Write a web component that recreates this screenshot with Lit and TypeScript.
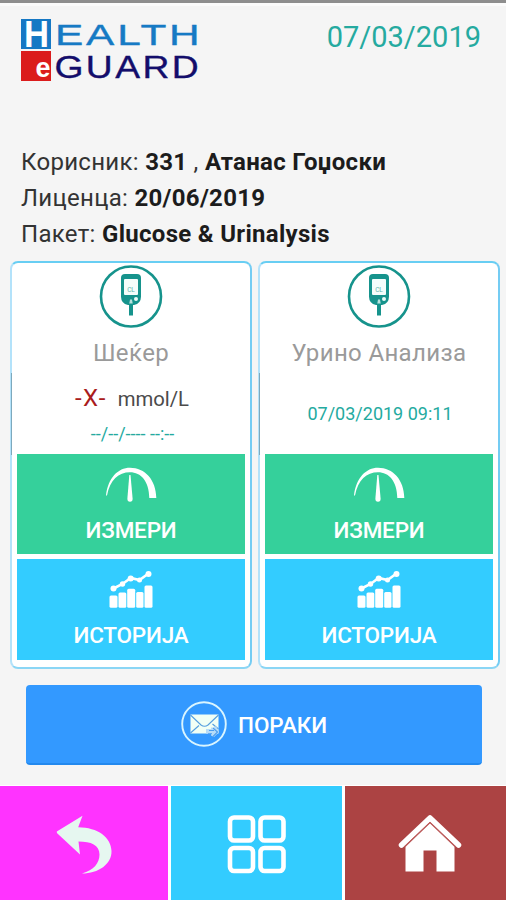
import { LitElement, html, css, svg, nothing } from "lit";
import { customElement, property } from "lit/decorators.js";

const meterIcon = html`<svg width="64" height="64" viewBox="0 0 64 64">
  <circle cx="32" cy="31.500" r="30" fill="#fff" stroke="#16938c" stroke-width="2.600" />
  <path d="M26 9h12q4 0 4 4v18.500q0 7-7 8.500h-6q-7-1.500-7-8.500V13q0-4 4-4z" fill="#16938c" />
  <rect x="25" y="14" width="14" height="16" rx="1" fill="#f4fdfb" />
  <text x="32" y="26.500" text-anchor="middle" font-size="6.500" font-family="Roboto, sans-serif" fill="#5fb5ae">CL</text>
  <circle cx="37" cy="34" r="2" fill="#e9fbf8" />
  <path d="M30 40l1-5.500h2l1 5.500z" fill="#b9e3de" />
  <rect x="30" y="38.500" width="4" height="12" fill="#16938c" />
</svg>`;

const gaugeIcon = html`<svg width="54" height="36" viewBox="0 0 54 36">
  <path d="M2 28.500C4 11 14 .8 26 .8c15 0 26 12 26.300 30.200h-7C45 14 37 5.200 26 5.200 14.500 5.200 6 13 3 28.500z" fill="#fff" />
  <path d="M25.300 8h1.200l2.100 23.500q.1 3.200-2.600 3.200t-2.600-3.200z" fill="#fff" />
</svg>`;

const chartIcon = html`<svg width="46" height="38" viewBox="0 0 46 38">
  <path d="M5.500 18.500l9-4.500 8.200-6 8.800 2 9-6.500" fill="none" stroke="#fff" stroke-width="2.600" />
  <g fill="#fff">
    <circle cx="5.500" cy="18.500" r="3" /><circle cx="14.500" cy="14" r="2.700" /><circle cx="22.700" cy="8.500" r="3" />
    <circle cx="31.500" cy="10" r="2.500" /><circle cx="40.500" cy="4" r="3" />
    <rect x="1.500" y="25.500" width="8" height="12.300" rx="1.500" /><rect x="10.500" y="22.500" width="7.800" height="15.300" rx="1.500" />
    <rect x="19.200" y="18.800" width="8" height="19" rx="1.500" /><rect x="28.200" y="22" width="7.300" height="15.800" rx="1.500" />
    <rect x="36.500" y="15.500" width="8" height="22.300" rx="1.500" />
  </g>
</svg>`;

const mailIcon = html`<svg width="46" height="46" viewBox="0 0 46 46">
  <circle cx="23" cy="23" r="21.800" fill="none" stroke="#d9f5ff" stroke-width="1.900" />
  <rect x="9.500" y="13.500" width="28" height="19" fill="#f1fff5" />
  <path d="M9.500 14l10.500 10q3.500 2.600 7 0l10.500-10M9.500 32l8.500-7.500M37.500 28l-6-5" fill="none" stroke="#559fdf" stroke-width="1.100" />
  <path d="M25 28h5v-1.500h3l2-1.500 3 6-5 5-3-1.500v-2h-5z" fill="#b7dcf8" />
  <path d="M32 27l4.500 4-4.500 4.500M27 32.800h4M28 29.500h5" fill="none" stroke="#4c9dee" stroke-width="1.100" />
</svg>`;

@customElement("health-logo")
export class HealthLogo extends LitElement {
  static styles = css`
    :host { display: block; }
    svg { display: block; overflow: visible; }
    .wide { font-family: "Liberation Sans", sans-serif; letter-spacing: 2px; stroke-width: .35px; }
    .slab { font-family: "Liberation Sans", sans-serif; font-weight: 700; }
  `;
  render() {
    return html`<svg width="182" height="66" viewBox="0 0 182 66">
      <rect x="0" y="1" width="30" height="30" fill="#1678c4" />
      <rect x="0" y="33" width="30" height="30" fill="#db1c1c" />
      <text class="slab" x="3" y="28.800" font-size="36" textLength="25" lengthAdjust="spacingAndGlyphs" fill="#fff">H</text>
      <text class="slab" x="14.500" y="59" font-size="27" textLength="15" lengthAdjust="spacingAndGlyphs" fill="#fff">e</text>
      <text class="wide" x="34" y="27" font-size="30" textLength="147.500" lengthAdjust="spacingAndGlyphs" fill="#167ac4" stroke="#167ac4">EALTH</text>
      <text class="wide" x="33.500" y="59.500" font-size="31" textLength="146.500" lengthAdjust="spacingAndGlyphs" fill="#130d6b" stroke="#130d6b">GUARD</text>
    </svg>`;
  }
}

@customElement("test-card")
export class TestCard extends LitElement {
  @property() name = "";
  @property() value = "";
  @property() unit = "";
  @property() taken = "";

  static styles = css`
    :host {
      display: flex; flex-direction: column; box-sizing: border-box; height: 408px;
      padding: 2px 5px 0; background: #fff; border: 2px solid #8bd6f5; border-top-color: #68cef3;
      border-left-color: #b3e2fa; border-right-color: #74ccf3; border-radius: 8px;
      font-family: Roboto, sans-serif; position: relative;
    }
    :host::before { content: ""; position: absolute; left: -1px; top: 110px; width: 1px; height: 82px; background: #7da9bd; }
    svg { display: block; }
    .head { display: flex; flex-direction: column; align-items: center; height: 189px; flex: none; }
    .name { margin-top: 10px; font-size: 24px; line-height: 28px; letter-spacing: .35px; color: #9a9a9a; white-space: nowrap; }
    .reading { display: flex; align-items: baseline; gap: 11px; margin-top: 16px; padding-left: 2px; line-height: 30px; }
    .value { font-size: 24px; color: #a91c1c; letter-spacing: 1.300px; }
    .unit { font-size: 20.300px; color: #4b4b4b; }
    .taken { color: #24aaa0; font-size: 18px; line-height: 22px; margin-top: 9px; padding-left: 3px; white-space: nowrap; }
    .only { margin-top: 36px; padding-left: 2px; }
    .action {
      display: flex; flex-direction: column; align-items: center; box-sizing: border-box; border: 0; padding: 13px 0 0;
      height: 100px; flex: none; font: 500 22.500px/28px Roboto, sans-serif; letter-spacing: -.2px; color: #fff; margin: 0;
    }
    .measure { background: #35d09b; }
    .history { background: #33ccff; margin-top: 5px; padding-top: 11px; height: 101px; }
    .measure span { margin-top: 13px; }
    .history span { margin-top: 13px; }
  `;

  render() {
    return html`
      <div class="head">
        ${meterIcon}
        <div class="name">${this.name}</div>
        ${this.value
          ? html`<div class="reading"><span class="value">${this.value}</span><span class="unit">${this.unit}</span></div>`
          : nothing}
        <div class="taken ${this.value ? "" : "only"}">${this.taken}</div>
      </div>
      <button class="action measure">${gaugeIcon}<span>ИЗМЕРИ</span></button>
      <button class="action history">${chartIcon}<span>ИСТОРИЈА</span></button>
    `;
  }
}

@customElement("app-root")
export class AppRoot extends LitElement {
  static styles = css`
    :host {
      display: flex; flex-direction: column; box-sizing: border-box; width: 506px; height: 900px; overflow: hidden;
      background: #f5f5f5; border-top: 3px solid #8e8e8e; font-family: Roboto, sans-serif;
    }
    svg { display: block; }
    .top { display: flex; justify-content: space-between; height: 142px; box-sizing: border-box; border-top: 3px solid #fbfbfb; padding: 12px 25px 0 21px; flex: none; }
    .date { font-size: 29px; line-height: 38px; color: #25aaa0; }
    .info { height: 116px; padding-left: 21px; font-size: 24px; line-height: 35.800px; letter-spacing: .3px; color: #333; flex: none; white-space: nowrap; }
    .info b { font-weight: 700; color: #1c1c1c; }
    .cards { display: grid; grid-template-columns: 242px 242px; gap: 6px; padding-left: 10px; flex: none; }
    .messages {
      display: flex; align-items: center; justify-content: center; gap: 11px; box-sizing: border-box; width: 456px; height: 80px;
      margin: 16px 0 0 26px; padding: 0; border: 0; border-bottom: 2px solid #2389ee; border-radius: 4px; background: #3399ff;
      color: #fff; font: 500 22.500px/28px Roboto, sans-serif; flex: none;
    }
    .messages span { padding-top: 2px; letter-spacing: -.1px; }
    .nav { display: grid; grid-template-columns: 168px 171px 161px; gap: 3px; margin-top: 20px; border-top: 1px solid #fff; background: #fff; flex: 1; }
    .tab { display: flex; justify-content: center; padding-top: 29px; }
    .back { background: #ff33ff; }
    .grid { background: #33ccff; }
    .home { background: #ac4343; padding-left: 8px; }
  `;

  private info = [
    ["Корисник:", "331", "Атанас Гоџоски"],
    ["Лиценца:", "20/06/2019"],
    ["Пакет:", "Glucose & Urinalysis"],
  ];

  render() {
    return html`
      <header class="top"><health-logo></health-logo><div class="date">07/03/2019</div></header>
      <section class="info">
        ${this.info.map(([k, v, w]) => html`<div>${k} <b>${v}</b>${w ? html` , <b>${w}</b>` : nothing}</div>`)}
      </section>
      <main class="cards">
        <test-card name="Шеќер" value="-X-" unit="mmol/L" taken="--/--/---- --:--"></test-card>
        <test-card name="Урино Анализа" taken="07/03/2019 09:11"></test-card>
      </main>
      <button class="messages">${mailIcon}<span>ПОРАКИ</span></button>
      <nav class="nav">
        <div class="tab back"><svg width="56" height="60" viewBox="0 0 56 60">
          <path d="M.8 16.500L26.500.8l-4.300 11.400C42 12.500 55 22 55.500 36c.4 13-13 22.500-29.500 22.500C38 55 43.500 48 43.500 39.500 43.500 30 35 26.500 22.500 26.500L24 39.500 2.500 19.500Q.2 18 .8 16.500z" fill="#e6f7f0" />
        </svg></div>
        <div class="tab grid"><svg width="60" height="60" viewBox="0 0 60 60">
          ${[3, 33.500].map((x) => [2.500, 33].map((y) => svg`<rect x=${x} y=${y} width="23" height="23" rx="4" fill="none" stroke="#fff" stroke-width="4.600" />`))}
        </svg></div>
        <div class="tab home"><svg width="64" height="60" viewBox="0 0 64 60">
          <path d="M3.500 30L32 3l28.500 27" fill="none" stroke="#fff" stroke-width="5.500" stroke-linecap="round" stroke-linejoin="round" />
          <path d="M32 8L56.500 31v25.500H38.500V35.500H25.500v21H7.500V31z" fill="#fff" />
          <path d="M6.500 32L32 7.500 57.500 32" fill="none" stroke="#bd5b5b" stroke-width="1.200" />
        </svg></div>
      </nav>
    `;
  }
}
